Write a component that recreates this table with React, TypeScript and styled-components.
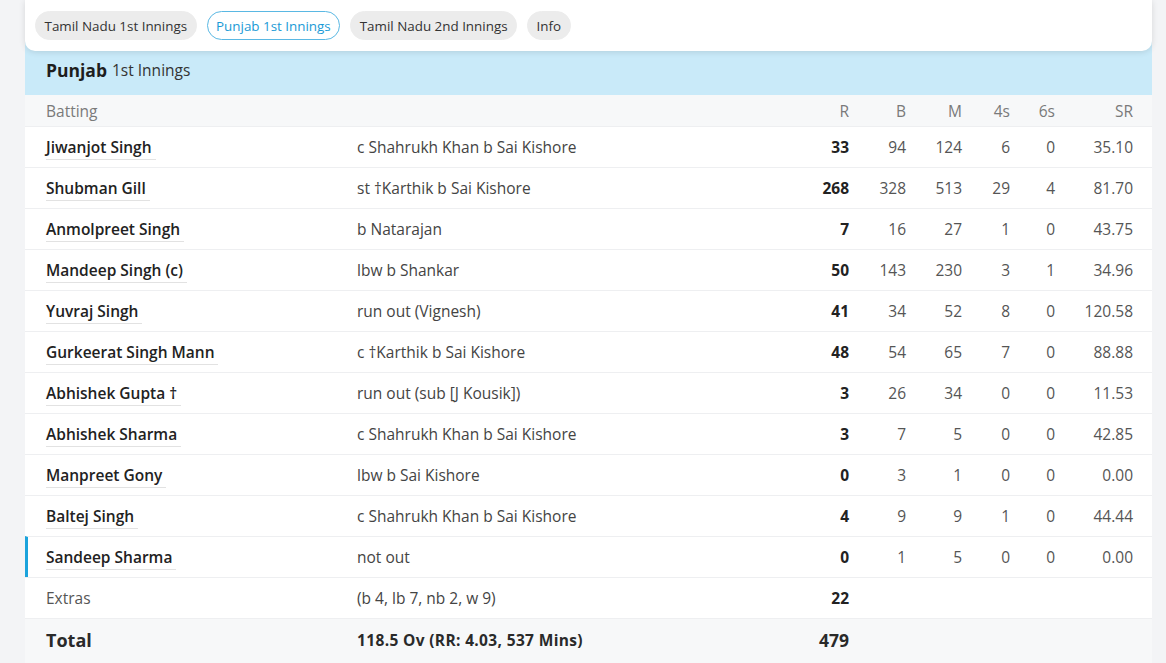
import React from 'react'
import styled, { createGlobalStyle } from 'styled-components'

const GlobalStyle = createGlobalStyle`
  html, body {
    margin: 0;
    padding: 0;
    background: #f3f4f6;
    font-family: 'Open Sans', 'Noto Sans', sans-serif;
    color: #222;
  }
`

const Page = styled.div`
  width: 1166px;
  height: 663px;
  overflow: hidden;
  background: #f3f4f6;
`

const Card = styled.div`
  margin-left: 25px;
  width: 1127px;
  display: flex;
  flex-direction: column;
`

const TabBar = styled.div`
  position: relative;
  z-index: 1;
  height: 51px;
  box-sizing: border-box;
  background: #fff;
  border-radius: 0 0 10px 10px;
  box-shadow: 0 1px 6px rgba(0, 0, 0, 0.12);
  display: flex;
  align-items: center;
  gap: 10px;
  padding: 0 10px;
`

const Tab = styled.div<{ $active?: boolean }>`
  height: 29px;
  box-sizing: border-box;
  display: flex;
  align-items: center;
  padding: 0 8.5px;
  border-radius: 15px;
  font-size: 13.4px;
  font-weight: 500;
  color: ${(p) => (p.$active ? '#1a9ad6' : '#333')};
  background: ${(p) => (p.$active ? '#fff' : '#ececec')};
  border: 1px solid ${(p) => (p.$active ? '#5ab8e3' : '#ececec')};
`

const InningsHeader = styled.div`
  margin-top: -10px;
  padding: 3px 21px 0;
  height: 54px;
  box-sizing: border-box;
  background: #c9eaf9;
  display: flex;
  align-items: center;
  gap: 5px;
  font-size: 15.5px;
  color: #333;

  b {
    font-size: 17.5px;
    font-weight: 700;
    color: #1e1e1e;
  }
`

const Grid = styled.div<{ $bg?: string; $h: number; $current?: boolean }>`
  display: grid;
  grid-template-columns: 311px 432px 60px 57px 56px 48px 45px 78px;
  align-items: center;
  height: ${(p) => p.$h}px;
  box-sizing: border-box;
  padding: 0 19px 0 ${(p) => (p.$current ? 18 : 21)}px;
  background: ${(p) => p.$bg || '#fff'};
  border-top: 1px solid #eeeff1;
  border-left: ${(p) => (p.$current ? '3px solid #1ba3dc' : 'none')};
  font-size: 15.5px;
`

const HeadRow = styled(Grid)`
  border-top: none;
`

const TotalRow = styled(Grid)`
  padding-bottom: 10px;
`

const HeadCell = styled.div<{ $right?: boolean }>`
  color: #7a7a7a;
  text-align: ${(p) => (p.$right ? 'right' : 'left')};
`

const Name = styled.div`
  margin-top: -1px;

  span {
    font-weight: 600;
    color: #222;
    padding-right: 4px;
    padding-bottom: 1px;
    border-bottom: 1px solid #e2e2e2;
  }
`

const Dismissal = styled.div`
  color: #444;
`

const Stat = styled.div<{ $bold?: boolean }>`
  text-align: right;
  color: ${(p) => (p.$bold ? '#222' : '#555')};
  font-weight: ${(p) => (p.$bold ? 700 : 400)};
`

const Muted = styled.div`
  color: #555;
`

const TotalLabel = styled.div`
  font-size: 18px;
  font-weight: 700;
  color: #2a2a2a;
`

const TotalText = styled.div`
  font-weight: 700;
  letter-spacing: 0.35px;
  color: #2a2a2a;
`

const TotalRuns = styled.div`
  text-align: right;
  font-size: 17.5px;
  font-weight: 700;
  color: #2a2a2a;
`

type Bat = [string, string, string, string, string, string, string, string]

const batters: Bat[] = [
  ['Jiwanjot Singh', 'c Shahrukh Khan b Sai Kishore', '33', '94', '124', '6', '0', '35.10'],
  ['Shubman Gill', 'st \u2020Karthik b Sai Kishore', '268', '328', '513', '29', '4', '81.70'],
  ['Anmolpreet Singh', 'b Natarajan', '7', '16', '27', '1', '0', '43.75'],
  ['Mandeep Singh (c)', 'lbw b Shankar', '50', '143', '230', '3', '1', '34.96'],
  ['Yuvraj Singh', 'run out (Vignesh)', '41', '34', '52', '8', '0', '120.58'],
  ['Gurkeerat Singh Mann', 'c \u2020Karthik b Sai Kishore', '48', '54', '65', '7', '0', '88.88'],
  ['Abhishek Gupta \u2020', 'run out (sub [J Kousik])', '3', '26', '34', '0', '0', '11.53'],
  ['Abhishek Sharma', 'c Shahrukh Khan b Sai Kishore', '3', '7', '5', '0', '0', '42.85'],
  ['Manpreet Gony', 'lbw b Sai Kishore', '0', '3', '1', '0', '0', '0.00'],
  ['Baltej Singh', 'c Shahrukh Khan b Sai Kishore', '4', '9', '9', '1', '0', '44.44'],
  ['Sandeep Sharma', 'not out', '0', '1', '5', '0', '0', '0.00'],
]

const tabs = ['Tamil Nadu 1st Innings', 'Punjab 1st Innings', 'Tamil Nadu 2nd Innings', 'Info']

export default function App() {
  return (
    <Page>
      <GlobalStyle />
      <Card>
        <TabBar>
          {tabs.map((t, i) => (
            <Tab key={t} $active={i === 1}>
              {t}
            </Tab>
          ))}
        </TabBar>
        <InningsHeader>
          <b>Punjab</b> 1st Innings
        </InningsHeader>

        <HeadRow $h={31} $bg="#f7f8f9">
          <HeadCell>Batting</HeadCell>
          <HeadCell />
          <HeadCell $right>R</HeadCell>
          <HeadCell $right>B</HeadCell>
          <HeadCell $right>M</HeadCell>
          <HeadCell $right>4s</HeadCell>
          <HeadCell $right>6s</HeadCell>
          <HeadCell $right>SR</HeadCell>
        </HeadRow>

        {batters.map((b, i) => (
          <Grid key={b[0]} $h={41} $current={i === batters.length - 1}>
            <Name>
              <span>{b[0]}</span>
            </Name>
            <Dismissal>{b[1]}</Dismissal>
            <Stat $bold>{b[2]}</Stat>
            <Stat>{b[3]}</Stat>
            <Stat>{b[4]}</Stat>
            <Stat>{b[5]}</Stat>
            <Stat>{b[6]}</Stat>
            <Stat>{b[7]}</Stat>
          </Grid>
        ))}

        <Grid $h={41}>
          <Muted>Extras</Muted>
          <Dismissal>(b 4, lb 7, nb 2, w 9)</Dismissal>
          <Stat $bold>22</Stat>
        </Grid>

        <TotalRow $h={52} $bg="#f7f8f9">
          <TotalLabel>Total</TotalLabel>
          <TotalText>118.5 Ov (RR: 4.03, 537 Mins)</TotalText>
          <TotalRuns>479</TotalRuns>
        </TotalRow>
      </Card>
    </Page>
  )
}
